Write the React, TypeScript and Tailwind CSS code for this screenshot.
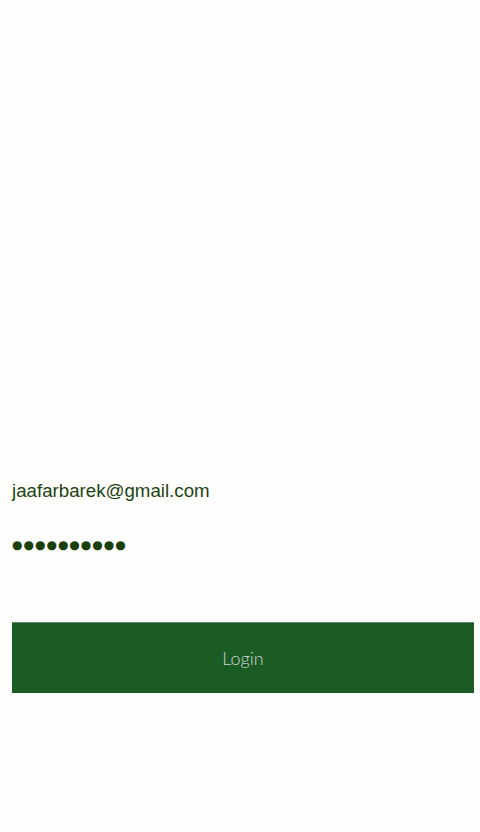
export default function App() {
  return (
    <div className="min-h-[832px] w-[480px] bg-[#fefefc] flex flex-col px-3 pt-[481px]">
      <p className="text-[18.7px] leading-5 text-[#1d4212] font-['Liberation_Sans',sans-serif]">
        jaafarbarek@gmail.com
      </p>
      <p className="mt-[34px] text-[12px] leading-5 tracking-[1px] text-[#1a3f08] font-['DejaVu_Sans',sans-serif]">
        ●●●●●●●●●●
      </p>
      <button className="mt-[67px] h-[71px] w-[462px] bg-[#1b5c24] border-t border-[#5a8a6a] text-[#c9d2d6] text-[18px] font-light font-['Lato',sans-serif]">
        Login
      </button>
    </div>
  );
}
